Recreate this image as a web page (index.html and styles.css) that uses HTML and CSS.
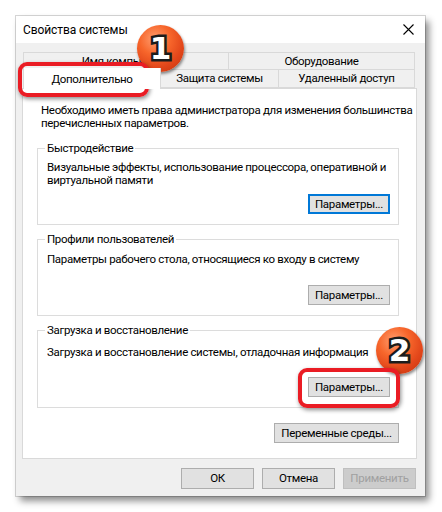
FILE: index.html
```html
<!DOCTYPE html>
<html lang="ru">
<head>
<meta charset="utf-8">
<title>Свойства системы</title>
<link rel="stylesheet" href="styles.css">
</head>
<body>
<div class="scene">
  <div class="window">
    <div class="titlebar">
      <span class="title">Свойства системы</span>
      <svg class="close" width="11" height="11" viewBox="0 0 11 11"><path d="M0.5 0.5L10.5 10.5M10.5 0.5L0.5 10.5" stroke="#000" stroke-width="1.1" fill="none"/></svg>
    </div>
    <div class="content">
      <div class="tabs">
        <div class="tabrow">
          <div class="tab tab-name">Имя компьютера</div>
          <div class="tab tab-hw">Оборудование</div>
        </div>
        <div class="tabrow">
          <div class="tab tab-adv active">Дополнительно</div>
          <div class="tab tab-prot">Защита системы</div>
          <div class="tab tab-remote">Удаленный доступ</div>
        </div>
      </div>
      <div class="panel">
        <p class="intro">Необходимо иметь права администратора для изменения большинства<br>перечисленных параметров.</p>
        <section class="group">
          <span class="legend">Быстродействие</span>
          <p class="desc">Визуальные эффекты, использование процессора, оперативной и<br>виртуальной памяти</p>
          <div class="btn-row"><button class="btn btn-default">Параметры...</button></div>
        </section>
        <section class="group group-mid">
          <span class="legend">Профили пользователей</span>
          <p class="desc">Параметры рабочего стола, относящиеся ко входу в систему</p>
          <div class="btn-row"><button class="btn">Параметры...</button></div>
        </section>
        <section class="group group-last">
          <span class="legend">Загрузка и восстановление</span>
          <p class="desc">Загрузка и восстановление системы, отладочная информация</p>
          <div class="btn-row"><button class="btn">Параметры...</button></div>
        </section>
        <div class="env-row"><button class="btn btn-env">Переменные среды...</button></div>
      </div>
      <div class="footer">
        <button class="btn btn-foot">ОК</button>
        <button class="btn btn-foot">Отмена</button>
        <button class="btn btn-foot btn-disabled">Применить</button>
      </div>
    </div>
  </div>
  <div class="badge badge-1">1</div>
  <div class="badge badge-2">2</div>
  <div class="frame frame-1"></div>
  <div class="frame frame-2"></div>
</div>
</body>
</html>
```

FILE: styles.css
```css
* { box-sizing: border-box; }
html, body { margin: 0; padding: 0; background: #fff; }
body {
  font-family: Roboto, "Noto Sans", sans-serif;
  font-size: 11.5px;
  letter-spacing: -0.33px;
  line-height: 13px;
  color: #000;
}
.scene {
  position: relative;
  width: 442px;
  height: 512px;
  padding: 16px 0 0 16px;
}
.window {
  width: 409px;
  height: 480px;
  background: #f0f0f0;
  box-shadow: 0 0 0 1px rgba(0,0,0,0.16), 4px 5px 7px rgba(0,0,0,0.45);
  display: flex;
  flex-direction: column;
}
.titlebar {
  height: 27px;
  background: #fff;
  display: flex;
  align-items: center;
  justify-content: space-between;
  padding: 0 11px 0 7px;
  flex: none;
}
.title { line-height: 14px; font-size: 12px; letter-spacing: -0.1px; }
.close { display: block; margin-top: -1px; }

.content {
  padding: 9px 8px 0 6px;
  display: flex;
  flex-direction: column;
}
.tabs { padding-left: 1px; }
.tabrow {
  display: flex;
  height: 18px;
}
.tab {
  height: 18px;
  border: 1px solid #d9d9d9;
  background: #f0f0f0;
  display: flex;
  align-items: center;
  justify-content: center;
  margin-right: -1px;
  white-space: nowrap;
  overflow: hidden;
}
.tabrow + .tabrow .tab { border-top: none; }
.tab-name { width: 206px; }
.tab-hw { width: 187px; }
.tab-adv { width: 138px; }
.tab-prot { width: 119px; }
.tab-remote { width: 137px; }
.tab.active {
  position: relative;
  z-index: 2;
  background: #fff;
  height: 21px;
  margin-top: -2px;
  border-top: 1px solid #d9d9d9;
  border-bottom: none;
  padding-top: 1px;
}

.panel {
  width: 395px;
  height: 371px;
  background: #fff;
  border: 1px solid #d9d9d9;
  padding: 15px 18px 0 14px;
  display: flex;
  flex-direction: column;
}
.intro {
  margin: 0 -14px 0 4px;
  white-space: nowrap;
}
.group {
  position: relative;
  margin: 18px 0 0 0;
  width: 362px;
  height: 77px;
  border: 1px solid #dcdcdc;
  padding: 12px 8px 10px 9px;
  display: flex;
  flex-direction: column;
}
.group + .group { margin-top: 14px; }
.group-mid { padding-top: 13px; }
.group-last { height: 78px; padding-top: 15px; }
.legend {
  position: absolute;
  left: 7px;
  top: -7px;
  padding: 0 2px;
  background: #fff;
  line-height: 13px;
  white-space: nowrap;
}
.desc { margin: 0 -6px 0 0; white-space: nowrap; }
.btn-row {
  margin-top: auto;
  display: flex;
  justify-content: flex-end;
}
.btn {
  font-family: inherit;
  font-size: 11.5px;
  letter-spacing: -0.3px;
  line-height: 13px;
  color: #000;
  background: #e1e1e1;
  border: 1px solid #adadad;
  height: 20px;
  width: 82px;
  padding: 0;
  margin: 0;
  display: flex;
  align-items: center;
  justify-content: center;
  white-space: nowrap;
}
.btn-default { border: 2px solid #0078d7; }
.env-row {
  margin-top: 15px;
  width: 362px;
  display: flex;
  justify-content: flex-end;
}
.btn-env { width: 125px; }
.footer {
  margin-top: 9px;
  display: flex;
  justify-content: flex-end;
  gap: 8px;
  padding-right: 1px;
}
.btn-foot { width: 73px; height: 21px; }
.btn-disabled {
  color: #a0a0a0;
  background: #cccccc;
  border-color: #bfbfbf;
}

.badge {
  position: absolute;
  width: 47px;
  height: 47px;
  border-radius: 50%;
  background: radial-gradient(circle at 38% 30%, #ff9e70 0%, #f7662b 35%, #e2461a 65%, #c0320c 100%);
  box-shadow: 1px 2px 3px rgba(0,0,0,0.45);
  display: flex;
  align-items: center;
  justify-content: center;
  font-family: "DejaVu Sans", sans-serif;
  font-weight: bold;
  font-size: 31px;
  line-height: 1;
  letter-spacing: 0;
  color: #fff;
  -webkit-text-stroke: 5px #1c1c1c;
  paint-order: stroke fill;
}
.badge-1 { left: 137px; top: 25px; }
.badge-2 { left: 376px; top: 327px; }
.frame {
  position: absolute;
  border: 4px solid #ea1c24;
  border-radius: 9px;
  box-shadow: 1px 2px 4px rgba(0,0,0,0.45);
}
.frame-1 { left: 18px; top: 62px; width: 131px; height: 35px; }
.frame-2 { left: 298px; top: 368px; width: 102px; height: 40px; }
```
